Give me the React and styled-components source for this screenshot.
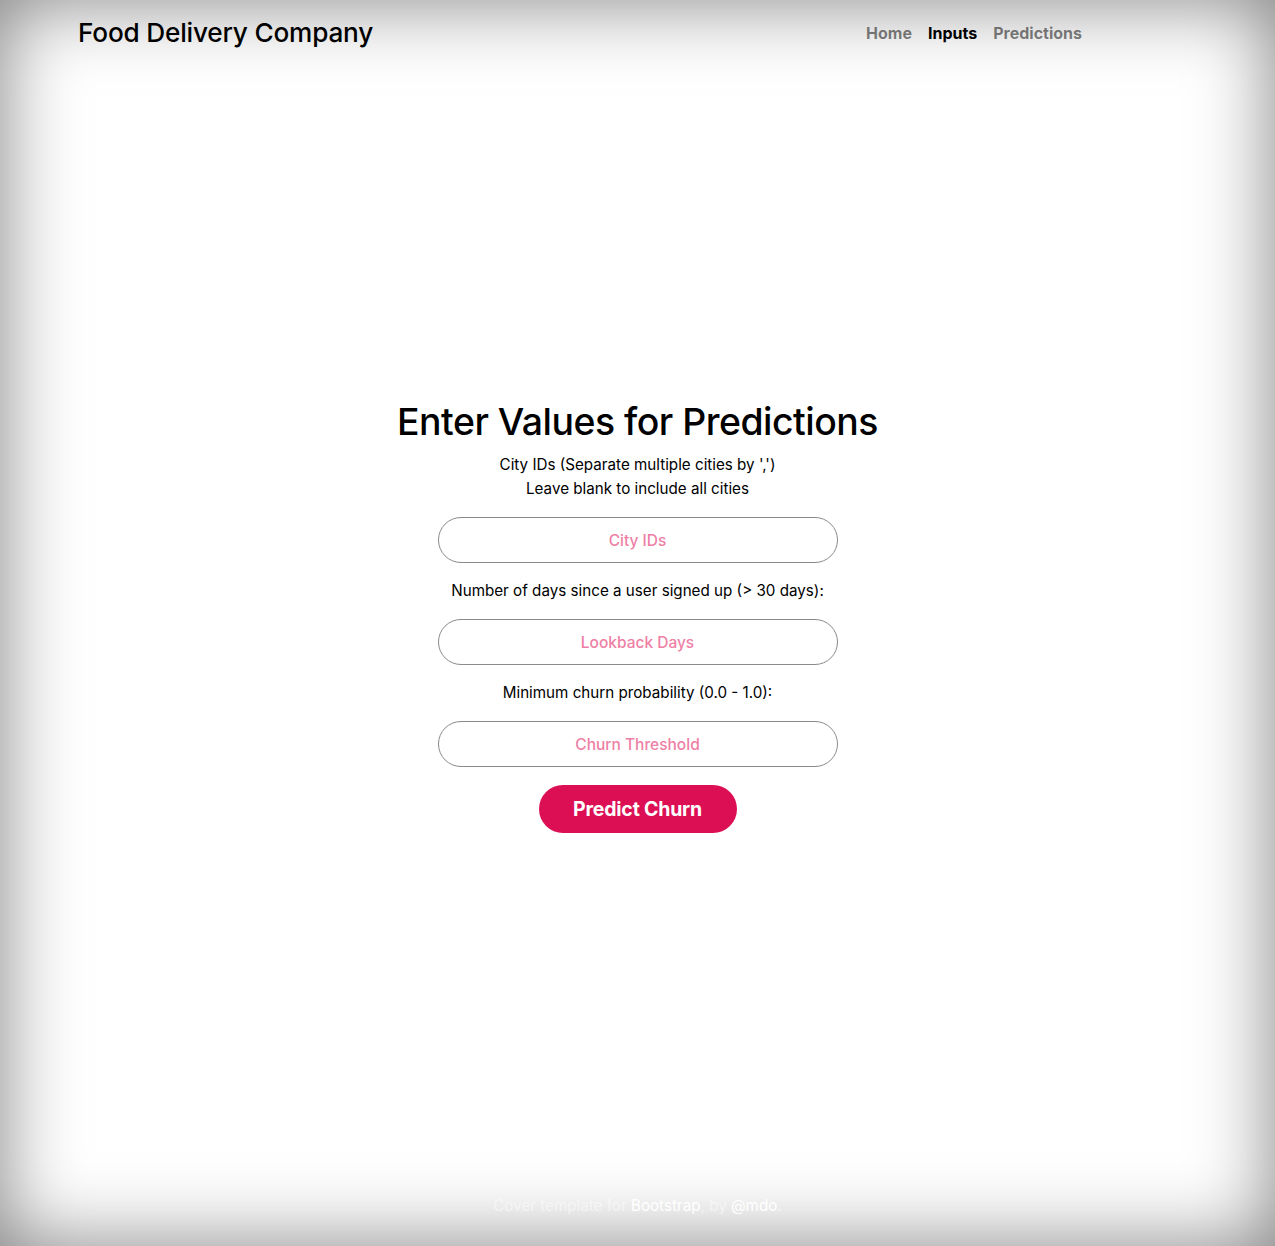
import React from "react";
import styled, { createGlobalStyle } from "styled-components";

const Global = createGlobalStyle`
  html, body { margin: 0; padding: 0; height: 100%; }
  body {
    background: #fff;
    color: #000;
    font-family: Inter, "Noto Sans", "Liberation Sans", sans-serif;
    box-shadow: inset 0 0 5rem rgba(0, 0, 0, 0.5);
    min-height: 1246px;
  }
`;

const Page = styled.div`
  box-sizing: border-box;
  min-height: 1246px;
  display: flex;
  flex-direction: column;
  padding: 16px 78px 28px;
`;

const Masthead = styled.header`
  display: flex;
  align-items: center;
  justify-content: space-between;
  padding-right: 115px;
`;

const Brand = styled.h3`
  margin: 0;
  font-size: 26.2px;
  font-weight: 500;
  line-height: 34px;
  letter-spacing: -0.2px;
`;

const Nav = styled.nav`
  display: flex;
  gap: 16px;
`;

const NavLink = styled.a`
  font-size: 16px;
  font-weight: 700;
  line-height: 24px;
  text-decoration: none;
  color: ${(p) => (p.$active ? "#000" : "rgba(0,0,0,0.5)")};
`;

const Main = styled.main`
  margin: auto 0;
  display: flex;
  flex-direction: column;
  align-items: center;
  text-align: center;
`;

const Title = styled.h1`
  margin: 0 0 7px;
  font-size: 37.4px;
  font-weight: 500;
  line-height: 48px;
  letter-spacing: -0.5px;
`;

const Form = styled.form`
  display: flex;
  flex-direction: column;
  align-items: center;
`;

const Label = styled.label`
  display: block;
  font-size: 15.2px;
  line-height: 24px;
  margin-bottom: 16px;
`;

const Input = styled.input`
  box-sizing: border-box;
  width: 400px;
  height: 46px;
  margin-bottom: 16px;
  border: 1px solid #8a8a8a;
  border-radius: 23px;
  background: #fff;
  text-align: center;
  font-family: inherit;
  font-size: 15.5px;
  font-weight: 500;
  outline: none;
  &::placeholder { color: #ee80a5; opacity: 1; }
`;

const Button = styled.button`
  margin-top: 2px;
  width: 198px;
  height: 48px;
  border: none;
  border-radius: 24px;
  background: #dc0f55;
  color: #fff;
  font-family: inherit;
  font-size: 19.5px;
  font-weight: 700;
  letter-spacing: -0.2px;
  cursor: pointer;
`;

const Footer = styled.footer`
  padding-top: 13px;
  text-align: center;
  font-size: 15.2px;
  line-height: 24px;
  color: rgba(255, 255, 255, 0.5);
`;

const FootLink = styled.a`
  color: #fff;
  text-decoration: none;
`;

export default function App() {
  return (
    <>
      <Global />
      <Page>
        <Masthead>
          <Brand>Food Delivery Company</Brand>
          <Nav>
            <NavLink href="#">Home</NavLink>
            <NavLink href="#" $active>Inputs</NavLink>
            <NavLink href="#">Predictions</NavLink>
          </Nav>
        </Masthead>
        <Main>
          <Title>Enter Values for Predictions</Title>
          <Form onSubmit={(e) => e.preventDefault()}>
            <Label>
              City IDs (Separate multiple cities by ',')
              <br />
              Leave blank to include all cities
            </Label>
            <Input placeholder="City IDs" />
            <Label>Number of days since a user signed up (&gt; 30 days):</Label>
            <Input placeholder="Lookback Days" />
            <Label>Minimum churn probability (0.0 - 1.0):</Label>
            <Input placeholder="Churn Threshold" />
            <Button type="submit">Predict Churn</Button>
          </Form>
        </Main>
        <Footer>
          Cover template for <FootLink href="#">Bootstrap</FootLink>, by{" "}
          <FootLink href="#">@mdo</FootLink>.
        </Footer>
      </Page>
    </>
  );
}
